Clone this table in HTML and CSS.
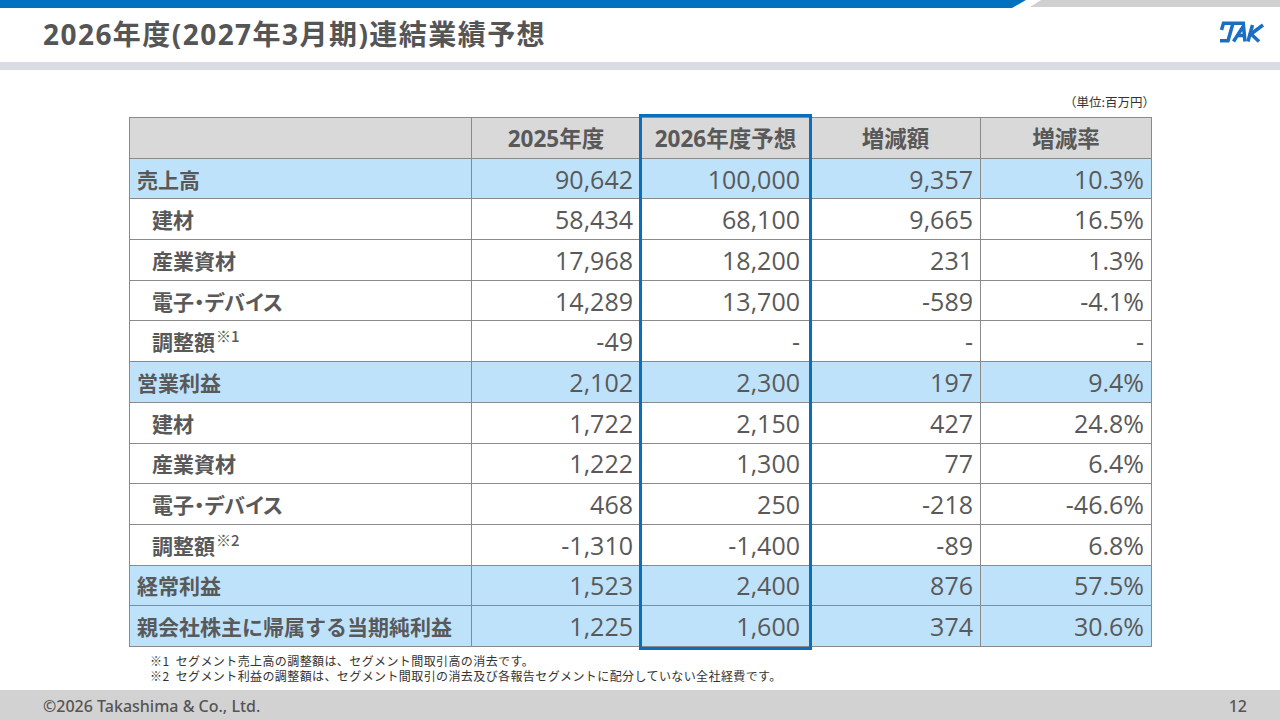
FILE: index.html
```html
<!DOCTYPE html>
<html lang="ja">
<head>
<meta charset="utf-8">
<link rel="stylesheet" href="styles.css">
</head>
<body>
<div class="slide">
  <div class="topbar"><div class="tb-blue"></div><div class="tb-grey"></div></div>
  <header class="head">
    <h1 class="title">2026年度(2027年3月期)連結業績予想</h1>
    <svg class="logo" viewBox="0 0 46 22" width="46" height="22">
      <g fill="none" stroke="#1b6fc2" stroke-width="3.5" stroke-linejoin="miter" stroke-linecap="butt">
        <path d="M2.5,9 L4.5,2.2 L25,2.2"/>
        <path d="M14,2.2 L9,19.8 L1,19.8"/>
        <path d="M14.5,20.5 L24.5,5 L26,20.5"/>
        <path d="M18.5,14.5 L25,14.5"/>
        <path d="M33.5,4 L29,20.5"/>
        <path d="M44,4 L32,13 L40,20.5"/>
      </g>
    </svg>
  </header>
  <div class="divider"></div>
  <main class="main">
    <div class="unit">（単位:百万円）</div>
    <div class="table-wrap">
      <table class="tbl">
        <thead>
          <tr><th class="lbl"></th><th>2025年度</th><th class="fc">2026年度予想</th><th>増減額</th><th>増減率</th></tr>
        </thead>
        <tbody>
          <tr class="hl"><td class="lbl">売上高</td><td>90,642</td><td class="fc">100,000</td><td>9,357</td><td>10.3%</td></tr>
          <tr><td class="lbl sub">建材</td><td>58,434</td><td class="fc">68,100</td><td>9,665</td><td>16.5%</td></tr>
          <tr><td class="lbl sub">産業資材</td><td>17,968</td><td class="fc">18,200</td><td>231</td><td>1.3%</td></tr>
          <tr><td class="lbl sub palt">電子・デバイス</td><td>14,289</td><td class="fc">13,700</td><td>-589</td><td>-4.1%</td></tr>
          <tr><td class="lbl sub">調整額<sup>※1</sup></td><td>-49</td><td class="fc">-</td><td>-</td><td>-</td></tr>
          <tr class="hl"><td class="lbl">営業利益</td><td>2,102</td><td class="fc">2,300</td><td>197</td><td>9.4%</td></tr>
          <tr><td class="lbl sub">建材</td><td>1,722</td><td class="fc">2,150</td><td>427</td><td>24.8%</td></tr>
          <tr><td class="lbl sub">産業資材</td><td>1,222</td><td class="fc">1,300</td><td>77</td><td>6.4%</td></tr>
          <tr><td class="lbl sub palt">電子・デバイス</td><td>468</td><td class="fc">250</td><td>-218</td><td>-46.6%</td></tr>
          <tr><td class="lbl sub">調整額<sup>※2</sup></td><td>-1,310</td><td class="fc">-1,400</td><td>-89</td><td>6.8%</td></tr>
          <tr class="hl"><td class="lbl">経常利益</td><td>1,523</td><td class="fc">2,400</td><td>876</td><td>57.5%</td></tr>
          <tr class="hl"><td class="lbl">親会社株主に帰属する当期純利益</td><td>1,225</td><td class="fc">1,600</td><td>374</td><td>30.6%</td></tr>
        </tbody>
      </table>
      <div class="focus"></div>
    </div>
    <div class="notes">
      <p>※1&nbsp; セグメント売上高の調整額は、セグメント間取引高の消去です。</p>
      <p>※2&nbsp; セグメント利益の調整額は、セグメント間取引の消去及び各報告セグメントに配分していない全社経費です。</p>
    </div>
  </main>
  <footer class="foot">
    <span class="copy">©2026 Takashima &amp; Co., Ltd.</span>
    <span class="page">12</span>
  </footer>
</div>
</body>
</html>
```

FILE: styles.css
```css
* { box-sizing: border-box; }
html, body { margin: 0; padding: 0; }
body {
  width: 1280px;
  height: 720px;
  overflow: hidden;
  background: #fff;
  font-family: "Noto Sans", "Noto Sans CJK JP", sans-serif;
  color: #595959;
}
.slide {
  width: 1280px;
  height: 720px;
  display: flex;
  flex-direction: column;
}
.topbar {
  height: 8px;
  display: flex;
}
.tb-blue {
  width: 1026px;
  height: 8px;
  background: #0070c0;
  clip-path: polygon(0 0, 100% 0, calc(100% - 14px) 100%, 0 100%);
}
.tb-grey {
  flex: 1;
  height: 7px;
  margin-left: 3px;
  background: #d0d0d0;
  clip-path: polygon(12px 0, 100% 0, 100% 100%, 1px 100%);
}
.head {
  height: 54px;
  display: flex;
  align-items: center;
  justify-content: space-between;
  padding: 0 14px 0 43px;
}
.title {
  margin: 0;
  font-family: "Noto Sans", "Noto Sans CJK JP", sans-serif;
  font-weight: 700;
  font-size: 28px;
  line-height: 1;
  color: #555;
  letter-spacing: 1.45px;
  position: relative;
  top: -1px;
}
.logo { display: block; margin-right: 1px; position: relative; top: -3px; }
.divider {
  height: 8px;
  background: #d9dde3;
}
.main {
  flex: 1;
  padding: 0 129px;
}
.unit {
  margin-top: 24px;
  margin-right: -4px;
  height: 16px;
  line-height: 16px;
  font-size: 12.5px;
  text-align: right;
  color: #333;
  font-family: "Noto Sans CJK JP", sans-serif;
}
.table-wrap {
  position: relative;
  margin-top: 7px;
}
.tbl {
  width: 1022px;
  border-collapse: collapse;
  table-layout: fixed;
}
.tbl th, .tbl td {
  border: 1px solid #8a8a8a;
  height: 40.7px;
  padding: 0 7px 0 0;
  text-align: right;
  vertical-align: middle;
  white-space: nowrap;
}
.tbl th:nth-child(1) { width: 342px; }
.tbl th:nth-child(2) { width: 169px; }
.tbl th:nth-child(3) { width: 170px; }
.tbl th:nth-child(4) { width: 170px; }
.tbl th:nth-child(5) { width: 171px; }
.tbl thead th {
  background: #d9d9d9;
  font-family: "Noto Sans", "Noto Sans CJK JP", sans-serif;
  font-weight: 700;
  font-size: 22.5px;
  text-align: center;
  padding: 0;
  color: #595959;
}
.tbl td {
  font-size: 25px;
  color: #595959;
  font-family: "Open Sans", "Noto Sans", sans-serif;
}
.tbl td.fc { padding-right: 10px; }
.tbl td.lbl {
  text-align: left;
  padding-left: 7px;
  font-family: "Noto Sans CJK JP", sans-serif;
  font-weight: 700;
  font-size: 21px;
}
.tbl td.lbl.sub { padding-left: 22px; }
.tbl td.palt { font-feature-settings: "palt"; }
.tbl td.lbl sup {
  font-size: 15px;
  font-weight: 500;
  vertical-align: 8px;
  line-height: 0;
  margin-left: 1px;
}
.tbl tr.hl td { background: #bfe2fb; }
.focus {
  position: absolute;
  left: 510px;
  width: 173px;
  top: -3px;
  bottom: -3px;
  border: 3px solid #0a6ebd;
  pointer-events: none;
}
.notes {
  margin: 6px 0 0 21px;
  font-family: "Noto Sans CJK JP", sans-serif;
  font-size: 12px;
  line-height: 15px;
  letter-spacing: 0.4px;
  color: #333;
}
.notes p { margin: 0; height: 15px; }
.foot {
  height: 30px;
  background: #d2d2d2;
  display: flex;
  align-items: center;
  justify-content: space-between;
  padding: 2px 33px 0 43px;
  font-family: "Noto Sans", sans-serif;
  font-size: 16px;
  font-weight: 500;
  color: #555;
}
```
